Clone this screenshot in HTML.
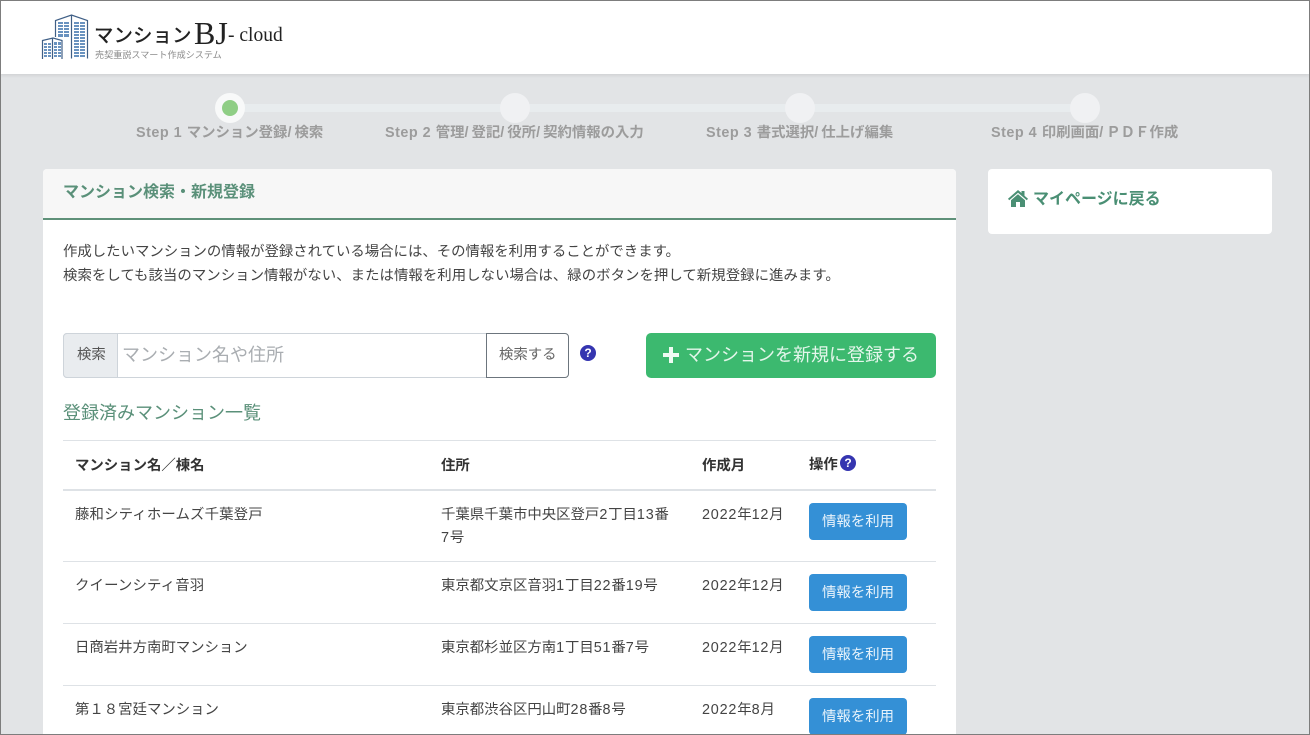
<!DOCTYPE html>
<html lang="ja"><head><meta charset="utf-8"><title>マンションBJ-cloud</title>
<style>
*{box-sizing:border-box}
html,body{margin:0;padding:0;width:1310px;height:735px;overflow:hidden}
body{background:#e2e4e6;font-family:"Liberation Sans","Noto Sans CJK JP",sans-serif;color:#444;font-size:14.4px;position:relative}
.t{position:absolute;white-space:nowrap;line-height:20px}
.b{position:absolute}
.step{font-weight:700;color:#9c9c9c;font-size:14.4px}
.step i{font-style:normal;letter-spacing:.5px}
.step u{text-decoration:none;letter-spacing:3px}
.n{letter-spacing:.8px}
.dot{position:absolute;top:93px;width:30px;height:30px;border-radius:50%;background:#f0f1f3}
.hr{position:absolute;left:63px;width:873px;height:1px;background:#dee2e6}
.use{position:absolute;left:809px;width:98px;height:37px;background:#3490d6;border-radius:4px;color:#e8f3fb;font-size:14.4px;text-align:center;line-height:38px}
.frame{position:absolute;left:0;top:0;width:1310px;height:735px;border:1px solid #7d7d7d;pointer-events:none}
</style></head><body>
<div class="b" style="left:0;top:0;width:1310px;height:74px;background:#fff;box-shadow:0 1px 4px rgba(0,0,0,.1)"></div>
<svg class="b" style="left:0;top:0" width="100" height="70" viewBox="0 0 100 70">
<g fill="#4f7fb4" opacity=".85"><rect x="58" y="22" width="11" height="15"/><rect x="74" y="22" width="11" height="35"/><rect x="44" y="43" width="7" height="14"/><rect x="54" y="42" width="7" height="15"/></g>
<g stroke="#fff" stroke-width="1"><path d="M58 24.500h11M58 27.500h11M58 30.500h11M58 33.500h11M74 24.500h11M74 27.500h11M74 30.500h11M74 33.500h11M74 36.500h11M74 39.500h11M74 42.500h11M74 45.500h11M74 48.500h11M74 51.500h11M74 54.500h11M44 45.500h7M44 48.500h7M44 51.500h7M44 54.500h7M54 45.500h7M54 48.500h7M54 51.500h7M54 54.500h7M47.500 43v14M57.500 42v15M63.500 22v15M79.500 22v35"/></g>
<g fill="none" stroke="#3f5f86" stroke-width="1.200"><path d="M55.500 37V20.500L71.500 15l16 5.500V58.500M71.500 15V58.500M42.500 59V40.500L53 38l9 2.500V59M52.500 38V59"/></g>
</svg>
<div class="t" style="left:94px;top:24px;font-size:19.500px;font-weight:500;color:#222;line-height:24px">マンション</div>
<div class="t" style="left:194px;top:15px;font-family:'Liberation Serif','Noto Serif CJK SC',serif;font-size:32px;color:#222;line-height:36px">BJ</div>
<div class="t" style="left:228px;top:24px;font-family:'Liberation Serif',serif;font-size:19.500px;color:#222;line-height:24px">- cloud</div>
<div class="t" style="left:95px;top:49px;font-size:9.100px;color:#8a8a8a;line-height:13px">売契重説スマート作成システム</div>

<div class="b" style="left:230px;top:104px;width:855px;height:8px;background:#e8ecee"></div>
<div class="dot" style="left:215px;background:#f8f9f9"></div>
<div class="b" style="left:222px;top:100px;width:16px;height:16px;border-radius:50%;background:#8fce85"></div>
<div class="dot" style="left:500px"></div><div class="dot" style="left:785px"></div><div class="dot" style="left:1070px"></div>
<div class="t step" style="left:136px;top:123px"><i>Step 1 </i>マンション登録<u>/</u>検索</div>
<div class="t step" style="left:385px;top:123px"><i>Step 2 </i>管理<u>/</u>登記<u>/</u>役所<u>/</u>契約情報の入力</div>
<div class="t step" style="left:706px;top:123px"><i>Step 3 </i>書式選択<u>/</u>仕上げ編集</div>
<div class="t step" style="left:991px;top:123px"><i>Step 4 </i>印刷画面<u>/</u>ＰＤＦ作成</div>

<div class="b" style="left:43px;top:169px;width:913px;height:570px;background:#fff;border-radius:4px 4px 0 0"></div>
<div class="b" style="left:43px;top:169px;width:913px;height:51px;background:#f7f7f7;border-bottom:2px solid #5f9179;border-radius:4px 4px 0 0"></div>
<div class="t" style="left:63px;top:183px;font-size:16px;font-weight:700;color:#5a9079">マンション検索・新規登録</div>
<div class="t" style="left:63px;top:242px">作成したいマンションの情報が登録されている場合には、その情報を利用することができます。</div>
<div class="t" style="left:63px;top:266px;letter-spacing:.05px">検索をしても該当のマンション情報がない、または情報を利用しない場合は、緑のボタンを押して新規登録に進みます。</div>

<div class="b" style="left:63px;top:333px;width:424px;height:45px;border:1px solid #ced4da;border-radius:4px 0 0 4px;background:#fff"></div>
<div class="b" style="left:63px;top:333px;width:55px;height:45px;border:1px solid #ced4da;border-radius:4px 0 0 4px;background:#e9ecef"></div>
<div class="t" style="left:77px;top:345px;font-size:14.400px;color:#555">検索</div>
<div class="t" style="left:122px;top:344px;font-size:18px;color:#a9adb1;line-height:22px">マンション名や住所</div>
<div class="b" style="left:486px;top:333px;width:83px;height:45px;border:1px solid #6c757d;border-radius:0 4px 4px 0;background:#fff"></div>
<div class="t" style="left:499px;top:345px;font-size:14.400px;color:#666">検索する</div>
<div class="b" style="left:580px;top:345px;width:16px;height:16px;border-radius:50%;background:#3535b0;color:#fff;font-size:12px;font-weight:700;text-align:center;line-height:16px">?</div>
<div class="b" style="left:646px;top:333px;width:290px;height:45px;background:#3cb96f;border-radius:5px"></div>
<svg class="b" style="left:663px;top:347px" width="16" height="16" viewBox="0 0 16 16"><path d="M6 0h4v6h6v4h-6v6H6v-6H0V6h6z" fill="#eefaf2"/></svg>
<div class="t" style="left:685px;top:343px;font-size:18px;color:#e4f6eb;line-height:24px">マンションを新規に登録する</div>
<div class="t" style="left:63px;top:401px;font-size:18px;color:#5a9079;line-height:24px">登録済みマンション一覧</div>

<div class="hr" style="top:440px"></div>
<div class="hr" style="top:489px;height:2px"></div>
<div class="t" style="left:75px;top:456px;font-weight:700;color:#333">マンション名／棟名</div>
<div class="t" style="left:441px;top:456px;font-weight:700;color:#333">住所</div>
<div class="t" style="left:702px;top:456px;font-weight:700;color:#333">作成月</div>
<div class="t" style="left:809px;top:455px;font-weight:700;color:#333">操作</div>
<div class="b" style="left:840px;top:455px;width:16px;height:16px;border-radius:50%;background:#3535b0;color:#fff;font-size:12px;font-weight:700;text-align:center;line-height:16px">?</div>

<div class="t" style="left:75px;top:505px;letter-spacing:.15px">藤和シティホームズ千葉登戸</div>
<div class="t" style="left:441px;top:505px">千葉県千葉市中央区登戸<span class="n">2</span>丁目<span class="n">13</span>番</div>
<div class="t" style="left:441px;top:528px"><span class="n">7</span>号</div>
<div class="t" style="left:702px;top:505px"><span class="n">2022</span>年<span class="n">12</span>月</div>
<div class="use" style="top:503px">情報を利用</div>
<div class="hr" style="top:561px"></div>

<div class="t" style="left:75px;top:576px;letter-spacing:.15px">クイーンシティ音羽</div>
<div class="t" style="left:441px;top:576px">東京都文京区音羽<span class="n">1</span>丁目<span class="n">22</span>番<span class="n">19</span>号</div>
<div class="t" style="left:702px;top:576px"><span class="n">2022</span>年<span class="n">12</span>月</div>
<div class="use" style="top:574px">情報を利用</div>
<div class="hr" style="top:623px"></div>

<div class="t" style="left:75px;top:638px">日商岩井方南町マンション</div>
<div class="t" style="left:441px;top:638px">東京都杉並区方南<span class="n">1</span>丁目<span class="n">51</span>番<span class="n">7</span>号</div>
<div class="t" style="left:702px;top:638px"><span class="n">2022</span>年<span class="n">12</span>月</div>
<div class="use" style="top:636px">情報を利用</div>
<div class="hr" style="top:685px"></div>

<div class="t" style="left:75px;top:700px">第１８宮廷マンション</div>
<div class="t" style="left:441px;top:700px">東京都渋谷区円山町<span class="n">28</span>番<span class="n">8</span>号</div>
<div class="t" style="left:702px;top:700px"><span class="n">2022</span>年<span class="n">8</span>月</div>
<div class="use" style="top:698px">情報を利用</div>

<div class="b" style="left:988px;top:169px;width:284px;height:65px;background:#fff;border-radius:4px"></div>
<svg class="b" style="left:1008px;top:190px" width="20" height="17" viewBox="0 0 20 17"><path d="M10 0 L13.500 3V1h3v4.800L20 8.800l-1.200 1.500L10 2.800 1.200 10.300 0 8.800z" fill="#4a8f74"/><path d="M10 4.200l7 6V17h-5v-5H8v5H3v-6.800z" fill="#4a8f74"/></svg>
<div class="t" style="left:1033px;top:190px;font-size:16px;font-weight:700;color:#4a8f74">マイページに戻る</div>
<div class="frame"></div>
</body></html>
